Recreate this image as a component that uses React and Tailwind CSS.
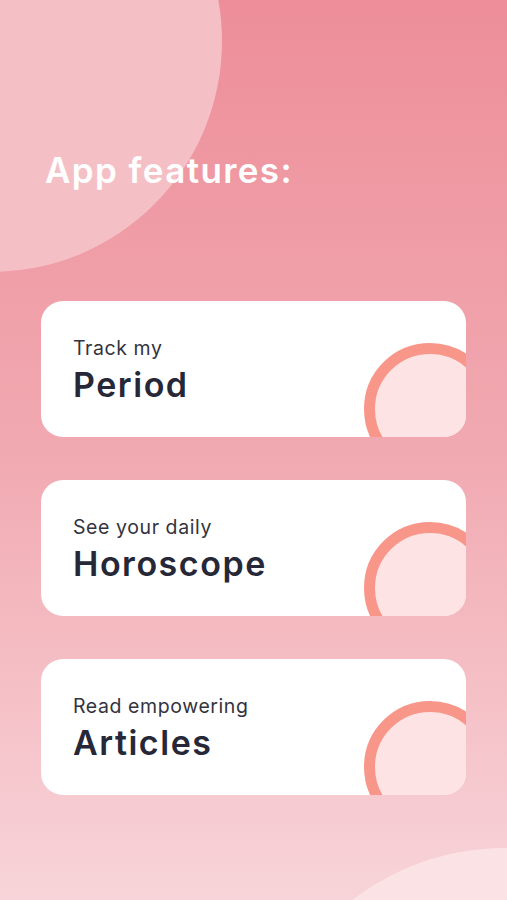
const features = [
  { lead: "Track my", title: "Period" },
  { lead: "See your daily", title: "Horoscope" },
  { lead: "Read empowering", title: "Articles" },
];

// one feature card, ring decoration sits in the bottom-right corner
const FeatureCard = ({ lead, title }) => {
  return (
    <div className="relative h-[136px] overflow-hidden rounded-[22px] bg-white pl-8 pt-[36px]">
      <p className="text-[19.5px] leading-[22px] tracking-[0.03em] text-[#33333d]">{lead}</p>
      <h2 className="mt-[7px] text-[34px] font-semibold leading-[38px] tracking-[0.045em] text-[#262838]">
        {title}
      </h2>
      <div className="absolute left-[323px] top-[42px] h-[132px] w-[132px] rounded-full border-[11px] border-[#f8968a] bg-[#fde3e3]"></div>
    </div>
  );
};

export default function App() {
  return (
    <div
      className="relative h-[900px] w-full overflow-hidden bg-gradient-to-b from-[#ed8e9a] via-[#f1a9b1] to-[#f7d4d9]"
      style={{ fontFamily: "Inter, 'Noto Sans', sans-serif" }}
    >
      {/* background blobs */}
      <div className="absolute left-[-240px] top-[-190px] h-[462px] w-[462px] rounded-full bg-[#f5bfc6]"></div>
      <div className="absolute left-[255px] top-[848px] h-[500px] w-[500px] rounded-full bg-[#fbe2e5]"></div>

      <div className="relative flex flex-col px-[41px] pt-[150px]">
        <h1 className="pl-1 text-[35px] font-semibold leading-[40px] tracking-[0.04em] text-white">
          App features:
        </h1>
        <div className="mt-[111px] flex flex-col gap-[43px]">
          {features.map((f) => (
            <FeatureCard key={f.title} lead={f.lead} title={f.title} />
          ))}
        </div>
      </div>
    </div>
  );
}
